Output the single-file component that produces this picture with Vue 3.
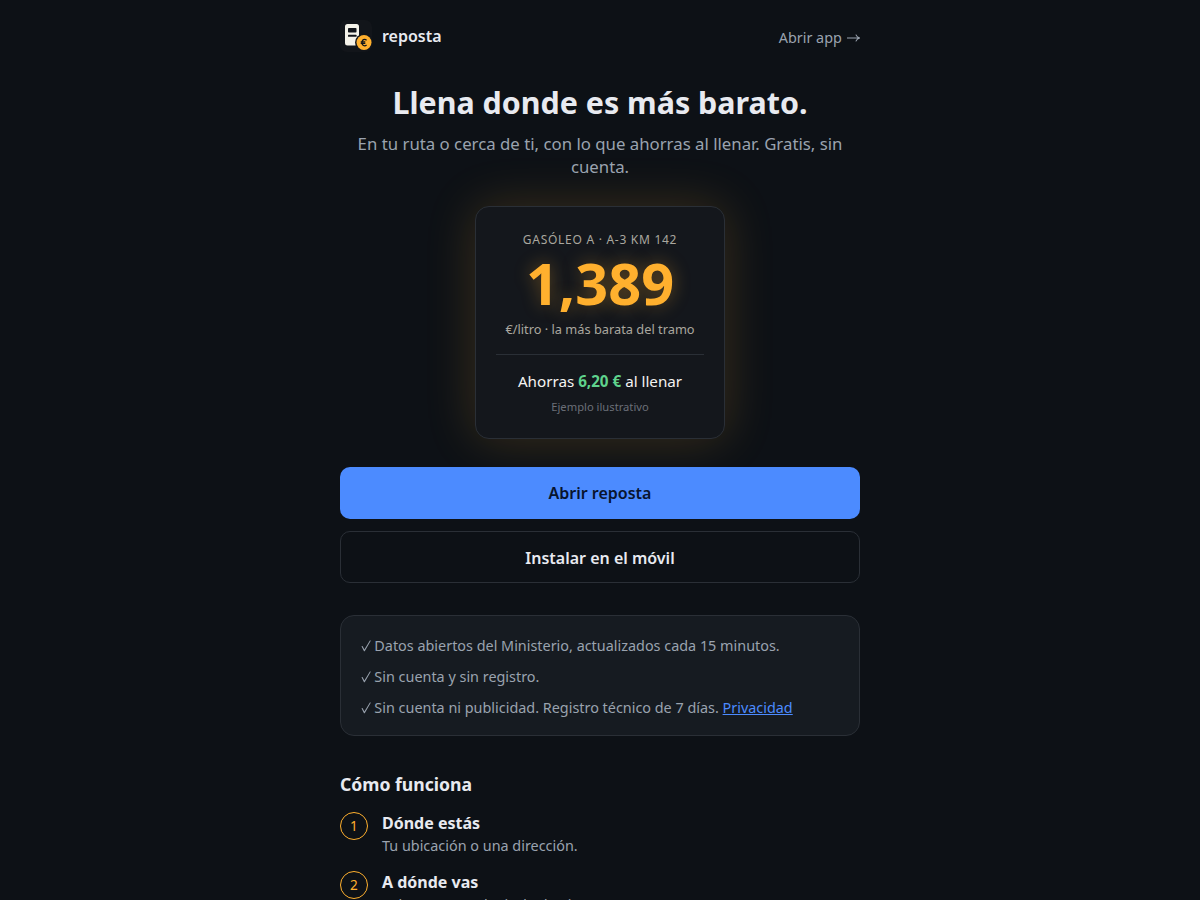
<script setup>
const facts = ['Datos abiertos del Ministerio, actualizados cada 15 minutos.', 'Sin cuenta y sin registro.']
const steps = [
  { title: 'Dónde estás', text: 'Tu ubicación o una dirección.' },
  { title: 'A dónde vas', text: 'Solo para ver, elegir de destino.' },
]
</script>

<template>
  <div class="page">
    <main>
      <header>
        <div class="brand">
          <svg width="32" height="32" viewBox="0 0 32 32">
            <rect width="32" height="32" rx="7" fill="#12151a" />
            <rect x="5" y="4" width="14" height="21.5" rx="2.5" fill="#f5f3ea" />
            <rect x="8" y="8" width="8.5" height="4.5" rx="0.8" fill="#12151a" />
            <rect x="8" y="14.8" width="8.5" height="2" rx="0.5" fill="#12151a" />
            <circle cx="24" cy="22.5" r="9" fill="#12151a" />
            <circle cx="24" cy="22.5" r="7.5" fill="#ffb02e" />
            <path d="M26.6 20.2Q25.7 19.4 24.6 19.4C22.8 19.4 22 20.8 22 22.6S22.8 25.8 24.6 25.8Q25.7 25.8 26.6 25M20.7 21.8H25.3M20.7 23.4H25.3" fill="none" stroke="#12151a" stroke-width="1.2" />
          </svg>
          <span>reposta</span>
        </div>
        <a class="open">Abrir app <svg class="arrow" width="14.4" height="10" viewBox="0 0 14.4 10"><path d="M1 5H13.6M9.8 1.6Q11 4.3 13.8 5Q11 5.7 9.8 8.4" /></svg></a>
      </header>
      <h1>Llena donde es más barato.</h1>
      <p class="lead">En tu ruta o cerca de ti, con lo que ahorras al llenar. Gratis, sin cuenta.</p>
      <section class="price">
        <div class="label">Gasóleo A · A-3 km 142</div>
        <div class="value">1,389</div>
        <div class="unit">€/litro · la más barata del tramo</div>
        <div class="saving">Ahorras <strong>6,20 €</strong> al llenar</div>
        <div class="note">Ejemplo ilustrativo</div>
      </section>
      <a class="button primary">Abrir reposta</a>
      <a class="button secondary">Instalar en el móvil</a>
      <ul class="facts">
        <li v-for="f in facts" :key="f"><svg class="check" width="10.1" height="12" viewBox="0 0 10.1 12"><path d="M.5 6.3L1.5 6L3.4 9.4L8.9 .5H9.9L3.7 11.3H3Z" /></svg> {{ f }}</li>
        <li><svg class="check" width="10.1" height="12" viewBox="0 0 10.1 12"><path d="M.5 6.3L1.5 6L3.4 9.4L8.9 .5H9.9L3.7 11.3H3Z" /></svg> Sin cuenta ni publicidad. Registro técnico de 7 días. <a class="link">Privacidad</a></li>
      </ul>
      <h2>Cómo funciona</h2>
      <ol class="steps">
        <li v-for="(s, i) in steps" :key="s.title">
          <span class="number">{{ i + 1 }}</span>
          <div><h3>{{ s.title }}</h3><p>{{ s.text }}</p></div>
        </li>
      </ol>
    </main>
  </div>
</template>

<style>
body { background: #0d1116; }
</style>
<style scoped>
* { box-sizing: border-box; }
.page { height: 900px; overflow: hidden; background: #0d1116; color: #e8eaf0; font: 16px/24px "Noto Sans", sans-serif; }
main { width: 520px; margin: 0 auto; padding-top: 20px; }
header { display: flex; align-items: center; justify-content: space-between; height: 32px; }
.brand { display: flex; gap: 10px; align-items: center; font-weight: 600; }
.brand svg { display: block; }
.open { font-size: 14.4px; color: #9aa3af; padding-top: 3px; }
.arrow { fill: none; stroke: currentColor; stroke-width: 1.1; }
.check { fill: currentColor; vertical-align: -1px; }
h1 { margin: 33px 0 0; font-size: 30.4px; line-height: 36.5px; font-weight: 700; text-align: center; }
.lead { margin: 10px 0 0; font-size: 16.8px; line-height: 23.5px; color: #9aa3af; text-align: center; }
.price { width: 250px; height: 233px; margin: 27px auto 28px; padding: 24px 20px; background: #14171c; border: 1px solid #2a2f36; border-radius: 14px; text-align: center; box-shadow: 0 0 50px rgba(255, 176, 46, .19); }
.label { font-size: 12px; line-height: 18px; letter-spacing: .72px; text-transform: uppercase; color: #aaa79f; }
.value { margin-top: 5px; font-size: 57.6px; line-height: 58px; font-weight: 700; color: #ffb02e; text-shadow: 0 0 18px rgba(255, 176, 46, .35); }
.unit { margin-top: 7px; font-size: 12.8px; line-height: 20px; color: #aaa79f; white-space: nowrap; }
.saving { margin-top: 15px; border-top: 1px solid #2a2f36; padding-top: 15px; font-size: 15.2px; line-height: 23px; color: #f4f4f2; }
.saving strong { color: #5fd38d; font-weight: 700; }
.note { margin-top: 5px; font-size: 11.2px; line-height: 17px; color: #6b6f78; }
.button { display: flex; height: 52px; align-items: center; justify-content: center; border-radius: 10px; font-weight: 600; }
.primary { background: #4c8bff; color: #08142e; }
.secondary { margin-top: 12px; border: 1px solid #2a2f36; padding-top: 2px; }
.facts { list-style: none; margin: 32px 0 0; padding: 18px 19.5px 16px; height: 121px; border: 1px solid #2a2f36; border-radius: 14px; background: #161b21; color: #9aa3af; font-size: 14.4px; line-height: 23px; }
.facts li { margin-bottom: 8px; }
.link { color: #4c8bff; text-decoration: underline; }
h2 { margin: 35px 0 0; font-size: 17.6px; line-height: 26px; font-weight: 700; }
.steps { margin: 13px 0 0; padding: 0; list-style: none; }
.steps li { display: flex; gap: 14px; height: 59px; }
.number { display: flex; flex: none; width: 28px; height: 28px; margin-top: 2px; border: 1px solid #ffb02e; border-radius: 50%; color: #ffb02e; align-items: center; justify-content: center; font-size: 13.6px; }
h3 { margin: 1px 0 0; font-size: 16px; line-height: 24px; font-weight: 700; }
.steps p { margin: 0; font-size: 14.4px; line-height: 22px; color: #9aa3af; white-space: nowrap; }
</style>
